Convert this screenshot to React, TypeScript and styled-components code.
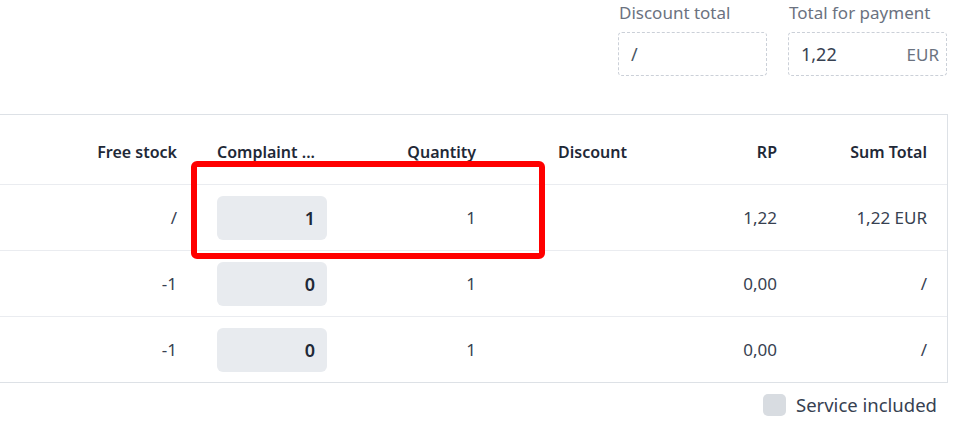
import styled, { createGlobalStyle } from "styled-components";

const GlobalStyle = createGlobalStyle`
  * { box-sizing: border-box; }
  body {
    margin: 0;
    font-family: "Noto Sans", "Open Sans", sans-serif;
    font-size: 16px;
    color: #374151;
    background: #ffffff;
  }
`

const Page = styled.div`
  width: 967px;
  height: 436px;
  overflow: hidden;
`

const TotalsBar = styled.div`
  display: flex;
  justify-content: flex-end;
  gap: 21px;
  padding: 1px 20px 0 0;
`

const Field = styled.div<{ $width: number }>`
  display: flex;
  flex-direction: column;
  gap: 7px;
  width: ${(p) => p.$width}px;
`

const FieldLabel = styled.span`
  color: #6b7280;
  font-size: 17px;
  line-height: 24px;
  padding-left: 1px;
`

const FieldBox = styled.div`
  display: flex;
  align-items: center;
  justify-content: space-between;
  height: 44px;
  padding: 0 7px 0 12px;
  border: 1px dashed #cbd0d8;
  border-radius: 4px;
`

const FieldValue = styled.span<{ $strong?: boolean }>`
  color: ${(p) => (p.$strong ? "#374151" : "#4b5563")};
  font-size: 18px;
`

const Currency = styled.span`
  color: #6b7280;
  font-size: 17px;
`

const TableWrap = styled.div`
  position: relative;
  margin-top: 38px;
  width: 948px;
  border: 1px solid #dde1e6;
  border-left: 0;
`

const Row = styled.div<{ $head?: boolean }>`
  display: grid;
  grid-template-columns: 193px 150px 199px 151px 100px 154px;
  align-items: center;
  height: ${(p) => (p.$head ? 69 : 66)}px;
  padding-top: ${(p) => (p.$head ? 4 : 0)}px;
  border-top: ${(p) => (p.$head ? "0" : "1px solid #eaecf0")};
`

type Col = { align: "left" | "right"; pl: number; pr: number }

const cols: Col[] = [
  { align: "right", pl: 0, pr: 16 },
  { align: "left", pl: 24, pr: 0 },
  { align: "right", pl: 0, pr: 66 },
  { align: "left", pl: 16, pr: 0 },
  { align: "right", pl: 0, pr: 16 },
  { align: "right", pl: 0, pr: 20 },
]

const Cell = styled.div<{ $col: Col; $head?: boolean }>`
  display: flex;
  justify-content: ${(p) => (p.$col.align === "right" ? "flex-end" : "flex-start")};
  padding-left: ${(p) => p.$col.pl}px;
  padding-right: ${(p) => p.$col.pr}px;
  color: ${(p) => (p.$head ? "#1f2937" : "#374151")};
  font-weight: ${(p) => (p.$head ? 600 : 400)};
  font-size: ${(p) => (p.$head ? 16 : 17)}px;
  white-space: nowrap;
`

const QtyInput = styled.div`
  display: flex;
  align-items: center;
  justify-content: flex-end;
  width: 110px;
  height: 44px;
  padding-right: 12px;
  background: #e8ebef;
  border-radius: 6px;
  color: #1f2937;
  font-weight: 600;
  font-size: 18px;
`

const Highlight = styled.div`
  position: absolute;
  left: 191px;
  top: 46px;
  width: 354px;
  height: 98px;
  border: 6px solid #ff0000;
  border-radius: 6px;
  pointer-events: none;
`

const Footer = styled.label`
  display: flex;
  justify-content: flex-end;
  align-items: center;
  gap: 10px;
  padding: 9px 30px 0 0;
  color: #374151;
  font-size: 18.5px;
`

const Checkbox = styled.span`
  width: 23px;
  height: 22px;
  background: #d8dce1;
  border-radius: 5px;
`

const rows = [
  { free: "/", complaint: "1", qty: "1", discount: "", rp: "1,22", sum: "1,22 EUR" },
  { free: "-1", complaint: "0", qty: "1", discount: "", rp: "0,00", sum: "/" },
  { free: "-1", complaint: "0", qty: "1", discount: "", rp: "0,00", sum: "/" },
]

const headers = ["Free stock", "Complaint ...", "Quantity", "Discount", "RP", "Sum Total"]

export default function App() {
  return (
    <Page>
      <GlobalStyle />
      <TotalsBar>
        <Field $width={149}>
          <FieldLabel>Discount total</FieldLabel>
          <FieldBox>
            <FieldValue>/</FieldValue>
          </FieldBox>
        </Field>
        <Field $width={159}>
          <FieldLabel>Total for payment</FieldLabel>
          <FieldBox>
            <FieldValue $strong>1,22</FieldValue>
            <Currency>EUR</Currency>
          </FieldBox>
        </Field>
      </TotalsBar>

      <TableWrap>
        <Row $head>
          {headers.map((h, i) => (
            <Cell key={h} $col={cols[i]} $head>{h}</Cell>
          ))}
        </Row>
        {rows.map((r, i) => (
          <Row key={i}>
            <Cell $col={cols[0]}>{r.free}</Cell>
            <Cell $col={cols[1]}>
              <QtyInput>{r.complaint}</QtyInput>
            </Cell>
            <Cell $col={cols[2]}>{r.qty}</Cell>
            <Cell $col={cols[3]}>{r.discount}</Cell>
            <Cell $col={cols[4]}>{r.rp}</Cell>
            <Cell $col={cols[5]}>{r.sum}</Cell>
          </Row>
        ))}
        <Highlight />
      </TableWrap>

      <Footer>
        <Checkbox />
        Service included
      </Footer>
    </Page>
  )
}
